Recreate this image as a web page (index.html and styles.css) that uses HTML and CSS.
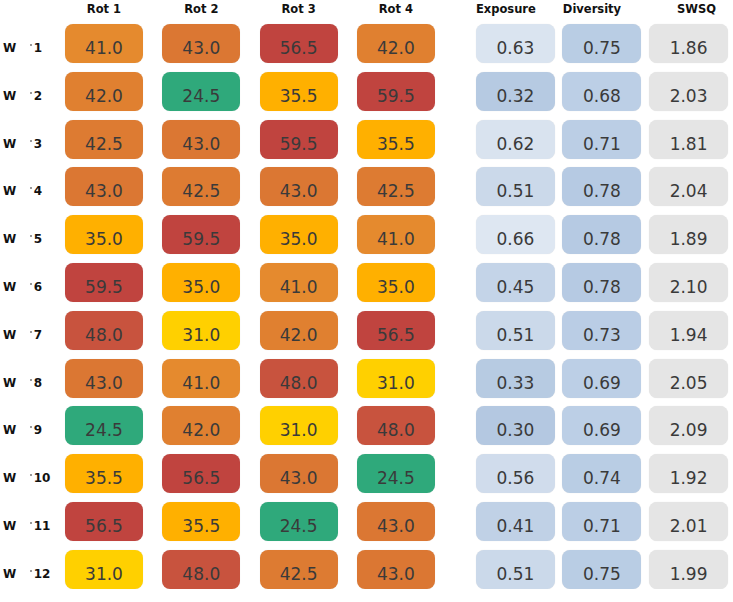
FILE: index.html
```html
<!DOCTYPE html>
<html>
<head>
<meta charset="utf-8">
<link rel="stylesheet" href="styles.css">
</head>
<body>
<div class="table">
  <div class="row head">
    <div class="label"></div>
    <div class="rots">
      <div class="hcell">Rot 1</div>
      <div class="hcell">Rot 2</div>
      <div class="hcell">Rot 3</div>
      <div class="hcell">Rot 4</div>
    </div>
    <div class="metrics">
      <div class="hcell h-exp">Exposure</div>
      <div class="hcell h-div">Diversity</div>
      <div class="hcell h-swsq">SWSQ</div>
    </div>
  </div>

  <div class="row">
    <div class="label"><span>W</span><span class="dot"></span><span class="num">1</span></div>
    <div class="rots"><div class="cell c410">41.0</div><div class="cell c430">43.0</div><div class="cell c565">56.5</div><div class="cell c420">42.0</div></div>
    <div class="metrics"><div class="cell m" style="background:#dae4f0">0.63</div><div class="cell m" style="background:#b9cde4">0.75</div><div class="cell s">1.86</div></div>
  </div>
  <div class="row">
    <div class="label"><span>W</span><span class="dot"></span><span class="num">2</span></div>
    <div class="rots"><div class="cell c420">42.0</div><div class="cell c245">24.5</div><div class="cell c355">35.5</div><div class="cell c595">59.5</div></div>
    <div class="metrics"><div class="cell m" style="background:#b6cae2">0.32</div><div class="cell m" style="background:#bccfe6">0.68</div><div class="cell s">2.03</div></div>
  </div>
  <div class="row">
    <div class="label"><span>W</span><span class="dot"></span><span class="num">3</span></div>
    <div class="rots"><div class="cell c425">42.5</div><div class="cell c430">43.0</div><div class="cell c595">59.5</div><div class="cell c355">35.5</div></div>
    <div class="metrics"><div class="cell m" style="background:#d9e3ef">0.62</div><div class="cell m" style="background:#bbcee5">0.71</div><div class="cell s">1.81</div></div>
  </div>
  <div class="row">
    <div class="label"><span>W</span><span class="dot"></span><span class="num">4</span></div>
    <div class="rots"><div class="cell c430">43.0</div><div class="cell c425">42.5</div><div class="cell c430">43.0</div><div class="cell c425">42.5</div></div>
    <div class="metrics"><div class="cell m" style="background:#cbd9ea">0.51</div><div class="cell m" style="background:#b6cae3">0.78</div><div class="cell s">2.04</div></div>
  </div>
  <div class="row">
    <div class="label"><span>W</span><span class="dot"></span><span class="num">5</span></div>
    <div class="rots"><div class="cell c350">35.0</div><div class="cell c595">59.5</div><div class="cell c350">35.0</div><div class="cell c410">41.0</div></div>
    <div class="metrics"><div class="cell m" style="background:#dee7f2">0.66</div><div class="cell m" style="background:#b6cae3">0.78</div><div class="cell s">1.89</div></div>
  </div>
  <div class="row">
    <div class="label"><span>W</span><span class="dot"></span><span class="num">6</span></div>
    <div class="rots"><div class="cell c595">59.5</div><div class="cell c350">35.0</div><div class="cell c410">41.0</div><div class="cell c350">35.0</div></div>
    <div class="metrics"><div class="cell m" style="background:#c4d4e8">0.45</div><div class="cell m" style="background:#b6cae3">0.78</div><div class="cell s">2.10</div></div>
  </div>
  <div class="row">
    <div class="label"><span>W</span><span class="dot"></span><span class="num">7</span></div>
    <div class="rots"><div class="cell c480">48.0</div><div class="cell c310">31.0</div><div class="cell c420">42.0</div><div class="cell c565">56.5</div></div>
    <div class="metrics"><div class="cell m" style="background:#cbd9ea">0.51</div><div class="cell m" style="background:#bacde5">0.73</div><div class="cell s">1.94</div></div>
  </div>
  <div class="row">
    <div class="label"><span>W</span><span class="dot"></span><span class="num">8</span></div>
    <div class="rots"><div class="cell c430">43.0</div><div class="cell c410">41.0</div><div class="cell c480">48.0</div><div class="cell c310">31.0</div></div>
    <div class="metrics"><div class="cell m" style="background:#b7cbe2">0.33</div><div class="cell m" style="background:#bccfe6">0.69</div><div class="cell s">2.05</div></div>
  </div>
  <div class="row">
    <div class="label"><span>W</span><span class="dot"></span><span class="num">9</span></div>
    <div class="rots"><div class="cell c245">24.5</div><div class="cell c420">42.0</div><div class="cell c310">31.0</div><div class="cell c480">48.0</div></div>
    <div class="metrics"><div class="cell m" style="background:#b4c8e1">0.30</div><div class="cell m" style="background:#bccfe6">0.69</div><div class="cell s">2.09</div></div>
  </div>
  <div class="row">
    <div class="label"><span>W</span><span class="dot"></span><span class="num">10</span></div>
    <div class="rots"><div class="cell c355">35.5</div><div class="cell c565">56.5</div><div class="cell c430">43.0</div><div class="cell c245">24.5</div></div>
    <div class="metrics"><div class="cell m" style="background:#d0dcec">0.56</div><div class="cell m" style="background:#b9cde4">0.74</div><div class="cell s">1.92</div></div>
  </div>
  <div class="row">
    <div class="label"><span>W</span><span class="dot"></span><span class="num">11</span></div>
    <div class="rots"><div class="cell c565">56.5</div><div class="cell c355">35.5</div><div class="cell c245">24.5</div><div class="cell c430">43.0</div></div>
    <div class="metrics"><div class="cell m" style="background:#c0d1e6">0.41</div><div class="cell m" style="background:#bbcee5">0.71</div><div class="cell s">2.01</div></div>
  </div>
  <div class="row">
    <div class="label"><span>W</span><span class="dot"></span><span class="num">12</span></div>
    <div class="rots"><div class="cell c310">31.0</div><div class="cell c480">48.0</div><div class="cell c425">42.5</div><div class="cell c430">43.0</div></div>
    <div class="metrics"><div class="cell m" style="background:#cbd9ea">0.51</div><div class="cell m" style="background:#b9cde4">0.75</div><div class="cell s">1.99</div></div>
  </div>
</div>
</body>
</html>
```

FILE: styles.css
```css
html, body {
  margin: 0;
  padding: 0;
  background: #ffffff;
  font-family: "DejaVu Sans", "Liberation Sans", sans-serif;
}

.table {
  display: flex;
  flex-direction: column;
  gap: 8.8px;
  width: 733px;
}

.row {
  display: flex;
  height: 39px;
}

.row.head {
  height: 24px;
  margin-bottom: -8.8px;
}

.label {
  width: 65px;
  flex: none;
  display: flex;
  align-items: flex-start;
  box-sizing: border-box;
  padding-left: 3px;
  padding-top: 17px;
  font-size: 12px;
  font-weight: bold;
  line-height: 14px;
  color: #111111;
}

.dot {
  width: 2px;
  height: 2px;
  border-radius: 50%;
  background: #777777;
  margin-left: 13.5px;
  margin-top: 3px;
}

.num {
  margin-left: 2px;
}

.rots {
  display: flex;
  gap: 19.3px;
}

.metrics {
  display: flex;
  gap: 7.6px;
  margin-left: 41px;
}

.hcell {
  width: 78px;
  text-align: center;
  font-size: 11.5px;
  font-weight: bold;
  line-height: 18px;
  color: #111111;
  box-sizing: border-box;
  white-space: nowrap;
}

.metrics .hcell {
  width: 79px;
}

.h-exp {
  padding-right: 34px;
}

.h-div {
  padding-right: 20px;
}

.h-swsq {
  padding-left: 16px;
}

.cell {
  width: 78px;
  height: 39px;
  box-sizing: border-box;
  border-radius: 8px;
  padding-top: 14px;
  line-height: 20px;
  font-size: 17px;
  text-align: center;
  color: #3a3a3a;
  box-shadow: 0 0 1px rgba(0, 0, 0, 0.12);
}

.metrics .cell {
  width: 79px;
}

.c245 { background: #2fa97b; }
.c310 { background: #ffd000; }
.c350 { background: #ffb000; }
.c355 { background: #ffb000; }
.c410 { background: #e58a2e; }
.c420 { background: #e08030; }
.c425 { background: #dd7b32; }
.c430 { background: #db7733; }
.c480 { background: #c8533e; }
.c565 { background: #c0443f; }
.c595 { background: #c0443f; }

.s { background: #e5e5e5; }
```
